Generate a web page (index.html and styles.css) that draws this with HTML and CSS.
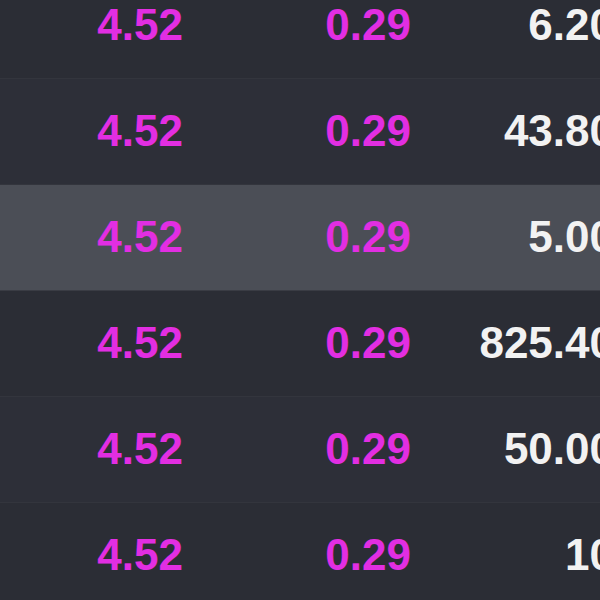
FILE: index.html
```html
<!DOCTYPE html>
<html lang="en">
<head>
    <meta charset="UTF-8">
    <title>Rates</title>
    <link rel="stylesheet" href="styles.css">
</head>
<body>
    <table class="rates">
        <tbody>
            <tr class="row"><td class="rate">4.52</td><td class="fee">0.29</td><td class="amount">6.20</td></tr>
            <tr class="row alt"><td class="rate">4.52</td><td class="fee">0.29</td><td class="amount">43.80</td></tr>
            <tr class="row active"><td class="rate">4.52</td><td class="fee">0.29</td><td class="amount">5.00</td></tr>
            <tr class="row"><td class="rate">4.52</td><td class="fee">0.29</td><td class="amount">825.40</td></tr>
            <tr class="row alt"><td class="rate">4.52</td><td class="fee">0.29</td><td class="amount">50.00</td></tr>
            <tr class="row"><td class="rate">4.52</td><td class="fee">0.29</td><td class="amount">10</td></tr>
        </tbody>
    </table>
</body>
</html>
```

FILE: styles.css
```css
* {
    margin: 0;
    padding: 0;
    box-sizing: border-box;
}
body {
    background: #2b2d35;
    font-family: 'Liberation Sans', Arial, sans-serif;
    overflow: hidden;
    width: 600px;
    height: 600px;
}
.rates {
    border-collapse: collapse;
    table-layout: fixed;
    width: 614px;
    margin-top: -28px;
}
.row {
    height: 106px;
    background: #2b2d35;
    border-bottom: 1px solid #33353d;
}
.row.alt {
    background: #2d2f38;
}
.row.active {
    background: #4b4e56;
    border-bottom-color: #3a3c44;
}
.row td {
    font-size: 44px;
    font-weight: bold;
    text-align: right;
    vertical-align: middle;
    white-space: nowrap;
}
.rate {
    width: 183px;
    color: #e22ee2;
}
.fee {
    width: 228px;
    color: #e22ee2;
}
.amount {
    width: 203px;
    color: #f2f2f2;
}
```
